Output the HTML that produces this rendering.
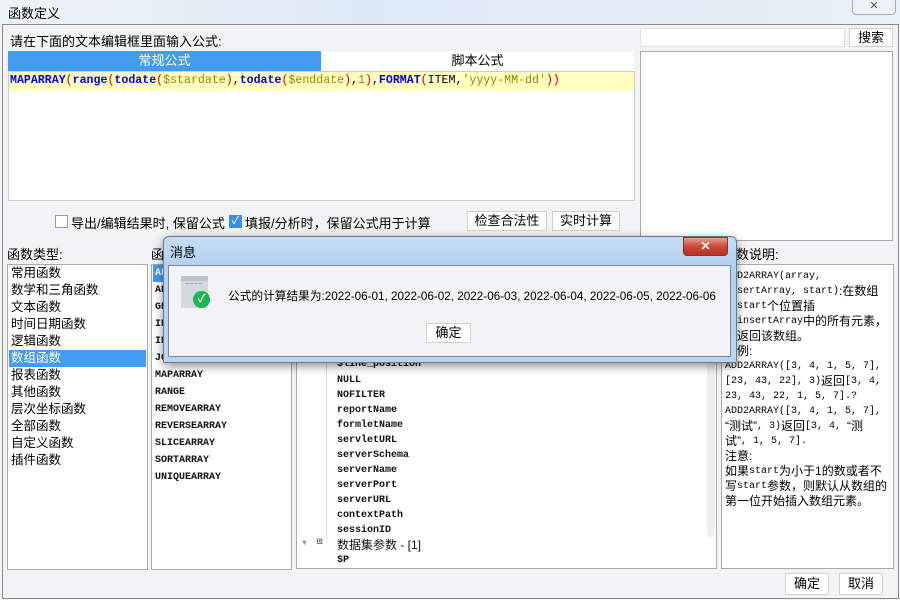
<!DOCTYPE html>
<html><head><meta charset="utf-8"><style>
*{margin:0;padding:0;box-sizing:border-box}
body{width:900px;height:600px;overflow:hidden;background:#f3f3f5;font-family:"Liberation Sans","Noto Sans CJK SC",sans-serif;font-size:12px;color:#000;position:relative}
.a{position:absolute;white-space:nowrap}
.box{position:absolute;background:#fff;border:1px solid #a9a9a9}
.btn{position:absolute;background:#fff;border:1px solid #d0d0d0;text-align:center;font-size:13px}
.li{position:absolute;left:1px;right:1px;height:17px;line-height:17px;padding-left:2px;font-size:12.5px}
.mono,.li.mono{font-family:"Liberation Mono","Noto Sans CJK SC",monospace;font-size:10px;font-weight:bold;color:#111}
.t{position:absolute;left:40px;height:15px;line-height:15px}
.k{color:#0000d0;font-weight:bold}.p{color:#d00000}.v{color:#a08000}
.d div{height:15px;line-height:15px;white-space:nowrap;overflow:visible;position:relative}
.d .m{font-family:"Liberation Mono",monospace;font-size:10px;vertical-align:top;line-height:15px}
</style></head><body>
<div class="a" style="left:0;top:0;width:900px;height:24px;background:linear-gradient(90deg,#eef3f8,#dde9f5 40%,#e8f0f8)"></div>
<div class="a" style="left:8px;top:3px;font-size:13px">函数定义</div>
<div class="a" style="left:852px;top:0;width:44px;height:15px;border:1px solid #aab;border-top:none;border-radius:0 0 4px 4px;background:#eef2f6;text-align:center;font-size:11px;line-height:13px;color:#556">✕</div>
<div class="a" style="left:2px;top:24px;width:897px;height:575px;border:1px solid #8a8a8a;background:#f3f3f5"></div>

<div class="a" style="left:10px;top:31px;font-size:13px">请在下面的文本编辑框里面输入公式:</div>
<div class="a" style="left:8px;top:51px;width:313px;height:20px;background:#439cf0;color:#fff;text-align:center;line-height:20px;font-size:13px">常规公式</div>
<div class="a" style="left:321px;top:51px;width:313px;height:20px;background:#fff;text-align:center;line-height:20px;font-size:13px">脚本公式</div>
<div class="box" style="left:8px;top:71px;width:627px;height:130px;border-color:#ccc"></div>
<div class="a" style="left:9px;top:72px;width:625px;height:19px;background:#ffffc0"></div>
<div class="a" style="left:10px;top:73px;font-family:'Liberation Mono',monospace;font-size:11.6px;line-height:16px"><span class="k">MAPARRAY</span><span class="p">(</span><span class="k">range</span><span class="p">(</span><span class="k">todate</span><span class="p">(</span><span class="v">$stardate</span><span class="p">)</span>,<span class="k">todate</span><span class="p">(</span><span class="v">$enddate</span><span class="p">)</span>,<span class="v">1</span><span class="p">)</span>,<span class="k">FORMAT</span><span class="p">(</span>ITEM,<span class="v">'yyyy-MM-dd'</span><span class="p">))</span></div>

<div class="box" style="left:640px;top:28px;width:205px;height:19px;border-color:#ddd"></div>
<div class="btn" style="left:849px;top:28px;width:44px;height:19px;line-height:17px">搜索</div>
<div class="box" style="left:640px;top:51px;width:253px;height:190px"></div>

<div class="a" style="left:55px;top:215px;width:13px;height:13px;border:1px solid #999;background:#fff"></div>
<div class="a" style="left:71px;top:213px;font-size:13px">导出/编辑结果时, 保留公式</div>
<div class="a" style="left:229px;top:215px;width:13px;height:13px;background:#3d8ee8;color:#fff;font-size:11px;line-height:13px;text-align:center">✓</div>
<div class="a" style="left:245px;top:213px;font-size:13px">填报/分析时，保留公式用于计算</div>
<div class="btn" style="left:467px;top:211px;width:80px;height:20px;line-height:18px">检查合法性</div>
<div class="btn" style="left:552px;top:211px;width:68px;height:20px;line-height:18px">实时计算</div>

<div class="a" style="left:7px;top:244px;font-size:13px">函数类型:</div>
<div class="a" style="left:151px;top:244px;font-size:13px">函数名:</div>
<div class="a" style="left:723px;top:244px;font-size:13px">函数说明:</div>

<div class="box" style="left:7px;top:264px;width:141px;height:306px">
<div class="li" style="top:0">常用函数</div><div class="li" style="top:17px">数学和三角函数</div><div class="li" style="top:34px">文本函数</div><div class="li" style="top:51px">时间日期函数</div><div class="li" style="top:68px">逻辑函数</div><div class="li" style="top:85px;background:#439cf0;color:#fff">数组函数</div><div class="li" style="top:102px">报表函数</div><div class="li" style="top:119px">其他函数</div><div class="li" style="top:136px">层次坐标函数</div><div class="li" style="top:153px">全部函数</div><div class="li" style="top:170px">自定义函数</div><div class="li" style="top:187px">插件函数</div>
</div>
<div class="box" style="left:151px;top:264px;width:141px;height:306px">
<div class="li mono" style="top:0;background:#439cf0;color:#fff">ADD2ARRAY</div><div class="li mono" style="top:17px">ARRAY</div><div class="li mono" style="top:34px">GREPARRAY</div><div class="li mono" style="top:51px">INDEXOFARRAY</div><div class="li mono" style="top:68px">INTERSECT</div><div class="li mono" style="top:85px">JOINARRAY</div><div class="li mono" style="top:102px">MAPARRAY</div><div class="li mono" style="top:119px">RANGE</div><div class="li mono" style="top:136px">REMOVEARRAY</div><div class="li mono" style="top:153px">REVERSEARRAY</div><div class="li mono" style="top:170px">SLICEARRAY</div><div class="li mono" style="top:187px">SORTARRAY</div><div class="li mono" style="top:204px">UNIQUEARRAY</div>
</div>
<div class="box mono" style="left:296px;top:264px;width:421px;height:305px">
<div class="a" style="left:29px;top:0;width:1px;height:275px;border-left:1px solid #ddd"></div>
<div class="t" style="top:92px">$line_position</div><div class="t" style="top:108px">NULL</div><div class="t" style="top:123px">NOFILTER</div><div class="t" style="top:138px">reportName</div><div class="t" style="top:153px">formletName</div><div class="t" style="top:168px">servletURL</div><div class="t" style="top:183px">serverSchema</div><div class="t" style="top:198px">serverName</div><div class="t" style="top:213px">serverPort</div><div class="t" style="top:228px">serverURL</div><div class="t" style="top:243px">contextPath</div><div class="t" style="top:258px">sessionID</div>
<div class="a" style="left:5px;top:274px;color:#999;font-size:8px">▼</div>
<div class="a" style="left:20px;top:272px;color:#546;font-size:9px">⊡</div>
<div class="t" style="left:40px;top:273px;font-size:12px;font-weight:normal;font-family:'Liberation Sans','Noto Sans CJK SC',sans-serif">数据集参数 - [1]</div>
<div class="t" style="top:288px">$P</div>
<div class="a" style="left:410px;top:0;width:8px;height:272px;background:#eee;border-radius:4px"></div>
</div>
<div class="box d" style="left:721px;top:264px;width:173px;height:305px;font-size:12px;padding:4px 3px;overflow:hidden">
<div class="m">ADD2ARRAY(array,</div>
<div><span class="m">insertArray, start)</span>:在数组</div>
<div>第<span class="m">start</span>个位置插</div>
<div>入<span class="m">insertArray</span>中的所有元素，</div>
<div>再返回该数组。</div>
<div>示例:</div>
<div class="m">ADD2ARRAY([3, 4, 1, 5, 7],</div>
<div><span class="m">[23, 43, 22], 3)</span>返回<span class="m">[3, 4,</span></div>
<div class="m">23, 43, 22, 1, 5, 7].?</div>
<div class="m">ADD2ARRAY([3, 4, 1, 5, 7],</div>
<div>“测试”<span class="m">, 3)</span>返回<span class="m">[3, 4, </span>“测</div>
<div>试”<span class="m">, 1, 5, 7].</span></div>
<div>注意:</div>
<div>如果<span class="m">start</span>为小于1的数或者不</div>
<div>写<span class="m">start</span>参数，则默认从数组的</div>
<div>第一位开始插入数组元素。</div>
</div>

<div class="btn" style="left:785px;top:573px;width:44px;height:22px;line-height:20px">确定</div>
<div class="btn" style="left:839px;top:573px;width:44px;height:22px;line-height:20px">取消</div>

<!-- dialog -->
<div class="a" style="left:163px;top:236px;width:574px;height:127px;border:1px solid #6a7a8a;border-radius:6px 6px 2px 2px;background:linear-gradient(180deg,#c5dcf3,#b3d1f0 30px,#b8d5f2);box-shadow:0 3px 10px rgba(0,0,0,.45)"></div>
<div class="a" style="left:170px;top:242px;font-size:13px">消息</div>
<div class="a" style="left:683px;top:237px;width:45px;height:19px;border:1px solid #8a3030;border-radius:0 0 4px 4px;background:linear-gradient(180deg,#e8a090,#c84a3a 50%,#b83020);color:#fff;text-align:center;font-weight:bold;font-size:12px;line-height:17px">✕</div>
<div class="a" style="left:168px;top:265px;width:563px;height:92px;background:#f3f3f5;border:1px solid #7a8a9a"></div>
<div class="a" style="left:181px;top:276px;width:27px;height:32px;background:#d3d8de"></div>
<div class="a" style="left:181px;top:276px;width:27px;height:5px;background:#bcc3ca"></div>
<div class="a" style="left:186px;top:283px;width:16px;border-top:1px dashed #a0a8b0"></div>
<div class="a" style="left:193px;top:291px;width:17px;height:17px;border-radius:50%;background:#1db550;color:#fff;font-size:11px;line-height:17px;text-align:center;font-weight:bold">✓</div>
<div class="a" style="left:228px;top:287px;font-size:11.7px">公式的计算结果为:2022-06-01, 2022-06-02, 2022-06-03, 2022-06-04, 2022-06-05, 2022-06-06</div>
<div class="btn" style="left:426px;top:323px;width:45px;height:20px;line-height:18px">确定</div>
</body></html>
